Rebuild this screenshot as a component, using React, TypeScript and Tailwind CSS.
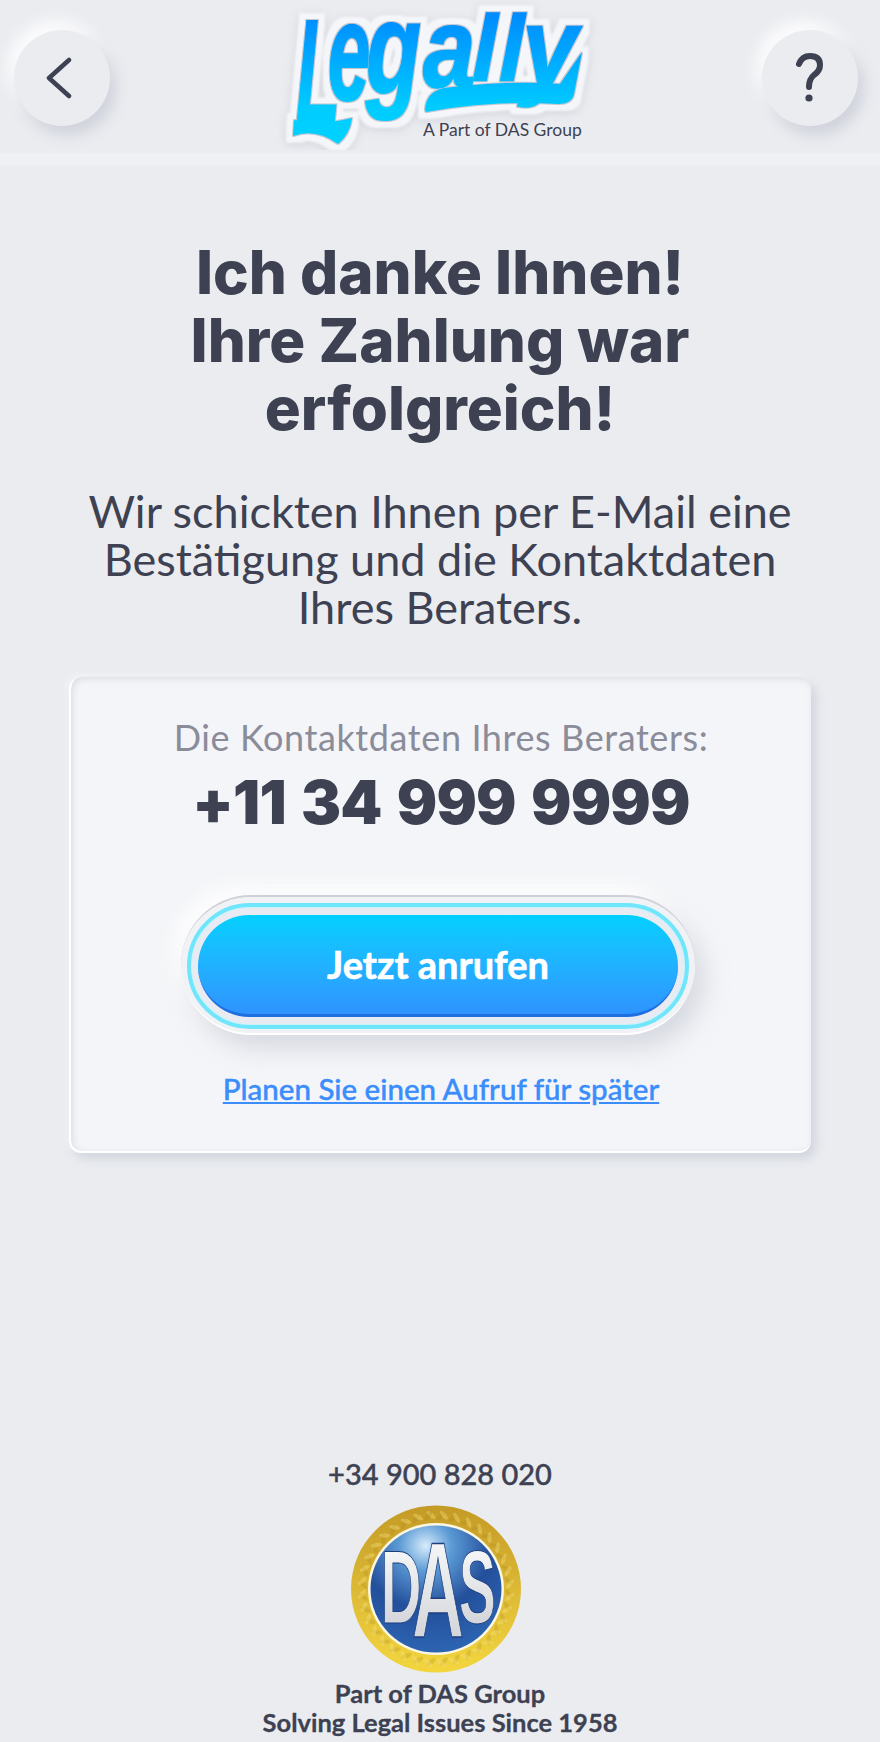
import React from "react";

const font = { fontFamily: '"Lato", "Noto Sans", sans-serif' };
const inter = { fontFamily: '"Inter", "Noto Sans", sans-serif' };

const LETTERS: [string, number, number, number, number][] = [
  ["L", 36, 122, 0.72, 1.46],
  ["e", 68, 100, 0.76, 1.4],
  ["g", 106, 93, 0.9, 1.3],
  ["a", 163, 87, 0.94, 1.14],
  ["l", 212, 80, 0.92, 0.92],
  ["l", 239, 80, 0.92, 0.92],
  ["y", 262, 84, 1.0, 1.1],
];

function Stops() {
  return (
    <>
      <stop offset="0" stopColor="#008cff" />
      <stop offset="0.72" stopColor="#00ccff" />
      <stop offset="1" stopColor="#00d2ff" />
    </>
  );
}

function Logo() {
  return (
    <svg width="350" height="150" viewBox="0 0 350 150" className="block">
      <defs>
        <linearGradient id="lg" gradientUnits="userSpaceOnUse" x1="0" y1="15" x2="0" y2="145">
          <Stops />
        </linearGradient>
        {LETTERS.map(([, , y, , sy], i) => (
          <linearGradient key={i} id={`lg${i}`} gradientUnits="userSpaceOnUse" x1="0" y1={(15 - y) / sy} x2="0" y2={(145 - y) / sy}>
            <Stops />
          </linearGradient>
        ))}
        <filter id="ls" x="-10%" y="-15%" width="120%" height="130%" colorInterpolationFilters="sRGB">
          <feMorphology in="SourceAlpha" operator="dilate" radius="1.2" result="thin" />
          <feFlood floodColor="#c3c7d2" />
          <feComposite in2="thin" operator="in" result="edge" />
          <feMorphology in="SourceAlpha" operator="dilate" radius="7" result="wide" />
          <feGaussianBlur in="wide" stdDeviation="1" result="wideSoft" />
          <feFlood floodColor="#f5f6f9" />
          <feComposite in2="wideSoft" operator="in" result="sticker" />
          <feGaussianBlur in="wide" stdDeviation="4" result="blur" />
          <feOffset in="blur" dy="2" result="off" />
          <feFlood floodColor="#b8bcc8" floodOpacity="0.5" />
          <feComposite in2="off" operator="in" result="shadow" />
          <feMerge>
            <feMergeNode in="shadow" />
            <feMergeNode in="sticker" />
            <feMergeNode in="edge" />
            <feMergeNode in="SourceGraphic" />
          </feMerge>
        </filter>
      </defs>
      <g filter="url(#ls)">
        {LETTERS.map(([c, x, y, sx, sy], i) => (
          <text
            key={i}
            transform={`translate(${x} ${y}) scale(${sx} ${sy})`}
            fontSize="100"
            fontWeight="700"
            fontStyle="italic"
            fontFamily='"Liberation Sans", sans-serif'
            fill={`url(#lg${i})`}
            stroke={`url(#lg${i})`}
            strokeWidth="1.5"
          >
            {c}
          </text>
        ))}
        <path d="M34 120 Q60 126 92 118 Q90 134 78 144 Q56 128 33 136 Z" fill="url(#lg)" />
        <path d="M165 110 Q166 92 184 88 Q250 80 300 84 L322 52 L314 94 Q312 104 298 104 Q230 100 166 112 Z" fill="url(#lg)" />
      </g>
      <text x="163" y="136" fontSize="17.5" fill="#3d4152" fontFamily='"Lato", sans-serif'>
        A Part of DAS Group
      </text>
    </svg>
  );
}

function DasLogo() {
  const leaves = Array.from({ length: 36 }, (_, i) => (i * 360) / 36);
  const letter = (c: string, x: number, y: number, sx: number, sy: number) => (
    <text
      transform={`translate(${x} ${y}) scale(${sx} ${sy})`}
      fontSize="100"
      fontWeight="700"
      fontFamily='"Liberation Sans", sans-serif'
      fill="url(#das)"
      stroke="#1d3f80"
      strokeWidth="1"
    >
      {c}
    </text>
  );
  return (
    <svg width="172" height="168" viewBox="0 0 172 168" className="block">
      <defs>
        <linearGradient id="gold2" x1="0" y1="0" x2="0" y2="1">
          <stop offset="0" stopColor="#c49a26" />
          <stop offset="0.5" stopColor="#dcb935" />
          <stop offset="1" stopColor="#f3d63e" />
        </linearGradient>
        <radialGradient id="blue" cx="42%" cy="16%" r="90%">
          <stop offset="0" stopColor="#d6ecfa" />
          <stop offset="0.22" stopColor="#5c9bd6" />
          <stop offset="0.55" stopColor="#234f9b" />
          <stop offset="1" stopColor="#2e68b6" />
        </radialGradient>
        <linearGradient id="das" x1="0" y1="0" x2="0" y2="1">
          <stop offset="0" stopColor="#ffffff" />
          <stop offset="1" stopColor="#c9ccd2" />
        </linearGradient>
      </defs>
      <ellipse cx="85" cy="84" rx="85" ry="83.5" fill="url(#gold2)" />
      {leaves.map((a) => (
        <g key={a} transform={`rotate(${a} 85 84)`}>
          <ellipse cx="80" cy="10" rx="2.2" ry="5.5" fill="#f7e27a" opacity="0.4" transform="rotate(-50 80 10)" />
          <ellipse cx="90" cy="11" rx="2.2" ry="5.5" fill="#a47f18" opacity="0.22" transform="rotate(50 90 11)" />
        </g>
      ))}
      <ellipse cx="85" cy="84" rx="68" ry="66" fill="#fbf7e0" />
      <ellipse cx="85" cy="84" rx="65.5" ry="63.5" fill="url(#blue)" />
      {letter("D", 30, 118, 0.56, 1.03)}
      {letter("A", 61, 132, 0.72, 1.36)}
      {letter("S", 108, 118, 0.55, 1.03)}
    </svg>
  );
}

function RoundBtn({ children }: { children: React.ReactNode }) {
  return (
    <div className="w-[96px] h-[96px] rounded-full bg-[#ebecf0] flex items-center justify-center shadow-[6px_9px_14px_rgba(175,179,195,0.45),-6px_-9px_16px_rgba(255,255,255,0.9)]">
      {children}
    </div>
  );
}

export default function App() {
  return (
    <div style={font} className="w-[880px] h-[1742px] bg-[#eaecf0] text-[#3d4152] flex flex-col overflow-hidden">
      <header className="h-[165px] shrink-0 bg-[#ebecf0] border-b-[12px] border-[#eff0f3] flex items-start justify-between pl-[14px] pr-[22px] pt-[30px] relative">
        <RoundBtn>
          <svg width="28" height="42" viewBox="0 0 28 42" fill="none" className="mr-[6px]">
            <path d="M24 3 L4 21 L24 39" stroke="#3d4152" strokeWidth="4.5" strokeLinecap="round" strokeLinejoin="round" />
          </svg>
        </RoundBtn>
        <div className="absolute left-[260px] top-0">
          <Logo />
        </div>
        <RoundBtn>
          <svg width="30" height="50" viewBox="0 0 30 50" fill="none">
            <path d="M4 11 Q7 3 15 3 Q25 3 25 12 Q25 18 19 22 Q14 26 14 34" stroke="#3d4152" strokeWidth="6" strokeLinecap="round" />
            <circle cx="14" cy="45" r="3.6" fill="#3d4152" />
          </svg>
        </RoundBtn>
      </header>

      <main className="flex flex-col items-center">
        <h1 style={inter} className="mt-[73px] w-[640px] text-center text-[60px] leading-[68px] font-extrabold text-[#3d4152]">
          Ich danke Ihnen!
          <br />
          Ihre Zahlung war
          <br />
          erfolgreich!
        </h1>
        <p className="mt-[45px] w-[780px] text-center text-[45px] leading-[48px] font-normal text-[#3d4152]">
          Wir schickten Ihnen per E-Mail eine
          <br />
          Bestätigung und die Kontaktdaten
          <br />
          Ihres Beraters.
        </p>

        <section className="mt-[46px] w-[742px] h-[476px] rounded-xl bg-[#f4f5f8] border-b-2 border-l-2 border-white flex flex-col items-center pt-[40px] shadow-[inset_2px_2px_6px_rgba(200,203,214,0.55),5px_6px_10px_rgba(190,193,205,0.5),-3px_-3px_6px_rgba(255,255,255,0.4)]">
          <div className="text-[36px] leading-[40px] tracking-[0.6px] text-[#8b8c9a]">Die Kontaktdaten Ihres Beraters:</div>
          <div style={inter} className="mt-[5px] text-[60px] leading-[80px] font-black [word-spacing:4px] tracking-[-0.8px] text-[#3d4152]">+11 34 999 9999</div>

          <div className="mt-[53px] mr-[6px] w-[514px] h-[140px] rounded-full px-[6px] pt-[6px] pb-[4px] bg-[#f1f2f5] border-t-2 border-[#cfd0d8] border-b-2 border-b-white shadow-[10px_14px_22px_rgba(190,193,205,0.5),-8px_-10px_20px_rgba(255,255,255,0.9)]">
            <div className="w-full h-full rounded-full border-[4px] border-[#6fe6fb] bg-[#e8ecf2] px-[7px] py-[8px] shadow-[inset_0_0_0_1px_#c9f3fb]">
              <button className="w-full h-full rounded-full bg-gradient-to-b from-[#00d0ff] to-[#2f93ff] border-b-[3px] border-[#1f6fe0] text-white text-[38px] font-bold [-webkit-text-stroke:0.6px_#ffffff]">
                Jetzt anrufen
              </button>
            </div>
          </div>

          <a className="mt-[36px] text-[29.5px] leading-[36px] font-medium text-[#3a8dfb] underline [-webkit-text-stroke:0.4px_#3a8dfb]">
            Planen Sie einen Aufruf für später
          </a>
        </section>

        <div className="mt-[303px] text-[29px] leading-[36px] font-medium text-[#3d4152] [-webkit-text-stroke:0.4px_#3d4152]">+34 900 828 020</div>
        <div className="mt-[13px] mr-[6px]">
          <DasLogo />
        </div>
        <div className="mt-[6px] text-center text-[25.5px] leading-[29px] font-bold text-[#3d4152] [-webkit-text-stroke:0.3px_#3d4152]">
          Part of DAS Group
          <br />
          Solving Legal Issues Since 1958
        </div>
      </main>
    </div>
  );
}
